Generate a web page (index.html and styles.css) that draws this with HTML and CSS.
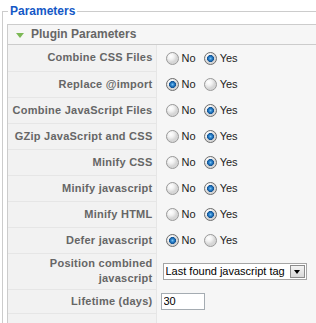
FILE: index.html
```html
<!DOCTYPE html>
<html lang="en">
<head>
  <meta charset="UTF-8" />
  <title>Plugin Parameters</title>
  <link rel="stylesheet" href="styles.css">
</head>
<body>
  <fieldset class="params">
    <legend>Parameters</legend>

    <div class="panel">
      <h3 class="panel-title"><span class="toggler">Plugin Parameters</span></h3>

      <table class="paramlist">
        <tr>
          <td class="key">Combine CSS Files</td>
          <td class="value">
            <input class="radio" type="radio" name="css" id="css0"><label for="css0">No</label>
            <input class="radio" type="radio" name="css" id="css1" checked><label for="css1">Yes</label>
          </td>
        </tr>
        <tr>
          <td class="key">Replace @import</td>
          <td class="value">
            <input class="radio" type="radio" name="imp" id="imp0" checked><label for="imp0">No</label>
            <input class="radio" type="radio" name="imp" id="imp1"><label for="imp1">Yes</label>
          </td>
        </tr>
        <tr>
          <td class="key">Combine JavaScript Files</td>
          <td class="value">
            <input class="radio" type="radio" name="js" id="js0"><label for="js0">No</label>
            <input class="radio" type="radio" name="js" id="js1" checked><label for="js1">Yes</label>
          </td>
        </tr>
        <tr>
          <td class="key">GZip JavaScript and CSS</td>
          <td class="value">
            <input class="radio" type="radio" name="gz" id="gz0"><label for="gz0">No</label>
            <input class="radio" type="radio" name="gz" id="gz1" checked><label for="gz1">Yes</label>
          </td>
        </tr>
        <tr>
          <td class="key">Minify CSS</td>
          <td class="value">
            <input class="radio" type="radio" name="mcss" id="mcss0"><label for="mcss0">No</label>
            <input class="radio" type="radio" name="mcss" id="mcss1" checked><label for="mcss1">Yes</label>
          </td>
        </tr>
        <tr>
          <td class="key">Minify javascript</td>
          <td class="value">
            <input class="radio" type="radio" name="mjs" id="mjs0"><label for="mjs0">No</label>
            <input class="radio" type="radio" name="mjs" id="mjs1" checked><label for="mjs1">Yes</label>
          </td>
        </tr>
        <tr>
          <td class="key">Minify HTML</td>
          <td class="value">
            <input class="radio" type="radio" name="mhtml" id="mhtml0"><label for="mhtml0">No</label>
            <input class="radio" type="radio" name="mhtml" id="mhtml1" checked><label for="mhtml1">Yes</label>
          </td>
        </tr>
        <tr>
          <td class="key">Defer javascript</td>
          <td class="value">
            <input class="radio" type="radio" name="defer" id="defer0" checked><label for="defer0">No</label>
            <input class="radio" type="radio" name="defer" id="defer1"><label for="defer1">Yes</label>
          </td>
        </tr>
        <tr class="tall">
          <td class="key">Position combined javascript</td>
          <td class="value">
            <span class="select">
              <select>
                <option>Last found javascript tag</option>
                <option>First found javascript tag</option>
                <option>Bottom of page</option>
              </select>
              <span class="select-btn"></span>
            </span>
          </td>
        </tr>
        <tr class="short">
          <td class="key">Lifetime (days)</td>
          <td class="value"><input class="text" type="text" value="30" size="5"></td>
        </tr>
        <tr>
          <td class="key"></td>
          <td class="value"></td>
        </tr>
      </table>
    </div>
  </fieldset>
</body>
</html>
```

FILE: styles.css
```css
/* base */
html, body {
  margin: 0;
  overflow: hidden;
}
body {
  font-family: "Liberation Sans", Arial, Helvetica, sans-serif;
  font-size: 11px;
  color: #222;
  background: #fff;
}

/* fieldset + legend */
.params {
  width: 420px;
  margin: 4px 0 0 2px;
  padding: 6px 0 0 4px;
  border: 1px solid #ccc;
  border-right: 0;
  border-bottom: 0;
}
.params legend {
  margin-left: 1px;
  padding: 0 2px;
  color: #1458c6;
  font-size: 12px;
  font-weight: bold;
  line-height: 14px;
}

/* slider panel */
.panel {
  border: 1px solid #ccc;
  border-right: 0;
  background: #f6f6f6;
}
.panel-title {
  margin: 0;
  height: 19px;
  padding: 0 4px;
  border-bottom: 1px solid #ccc;
  background: #f6f6f6;
  color: #666;
  font-size: 12px;
  font-weight: bold;
  line-height: 19px;
}
.toggler {
  display: inline-block;
  padding-left: 19px;
  position: relative;
}
.toggler::before {
  content: "";
  position: absolute;
  left: 4px;
  top: 8px;
  border-left: 4.5px solid transparent;
  border-right: 4.5px solid transparent;
  border-top: 5px solid #7cb855;
}

/* param rows */
.paramlist {
  border-collapse: collapse;
  width: 100%;
}
.paramlist td {
  padding: 0;
  vertical-align: middle;
}
.paramlist .key {
  width: 148px;
  height: 26px;
  padding: 2px 3px 2px 4px;
  box-sizing: border-box;
  background: #f2f2f2;
  border-bottom: 1px solid #e6e6e6;
  border-right: 1px solid #e6e6e6;
  color: #666;
  font-weight: bold;
  letter-spacing: 0.25px;
  text-align: right;
  line-height: 15px;
}
.paramlist .tall .key {
  height: 36px;
}
.paramlist .short .key {
  height: 24px;
}
.paramlist .value {
  padding-left: 4px;
  white-space: nowrap;
}
.value label {
  padding: 0 0 0 3px;
  vertical-align: middle;
}

/* radios, xp look */
.radio {
  appearance: none;
  -webkit-appearance: none;
  width: 13px;
  height: 13px;
  margin: 0 0 0 5px;
  border: 1px solid #9a9a9a;
  border-radius: 50%;
  background: radial-gradient(circle at 35% 30%, #fff 0, #f2f2f2 3px, #d6d6d6 6px);
  vertical-align: middle;
  box-sizing: border-box;
}
.radio:checked {
  background:
    radial-gradient(circle at 50% 50%, #7cc4f2 0, #2b82cc 1.6px, #0f4f8f 3.4px, transparent 3.7px),
    radial-gradient(circle at 35% 30%, #fff 0, #f2f2f2 3px, #d6d6d6 6px);
  border-color: #6e6e6e;
}

/* select */
.select {
  display: inline-flex;
  align-items: center;
  width: 144px;
  height: 17px;
  margin-left: 2px;
  border: 1px solid #a5a5a5;
  background: #fff;
  box-sizing: border-box;
  vertical-align: middle;
}
.select select {
  appearance: none;
  -webkit-appearance: none;
  flex: 1;
  min-width: 0;
  border: 0;
  padding: 0 0 0 2px;
  margin: 0;
  background: transparent;
  font: 11px "Liberation Sans", Arial, sans-serif;
  color: #000;
  height: 15px;
  outline: none;
}
.select-btn {
  width: 15px;
  height: 13px;
  margin: 0 1px;
  border: 1px solid #8c8c8c;
  background: linear-gradient(#f4f4f4, #d8d8d8);
  box-sizing: border-box;
  display: flex;
  align-items: center;
  justify-content: center;
}
.select-btn::after {
  content: "";
  border-left: 3.5px solid transparent;
  border-right: 3.5px solid transparent;
  border-top: 4px solid #000;
  margin-top: 1px;
}

/* text input */
.text {
  width: 44px;
  height: 17px;
  margin: 0;
  padding: 0 2px;
  border: 1px solid #a5acb2;
  box-sizing: border-box;
  font: 11px "Liberation Sans", Arial, sans-serif;
  color: #000;
  vertical-align: middle;
}
```
